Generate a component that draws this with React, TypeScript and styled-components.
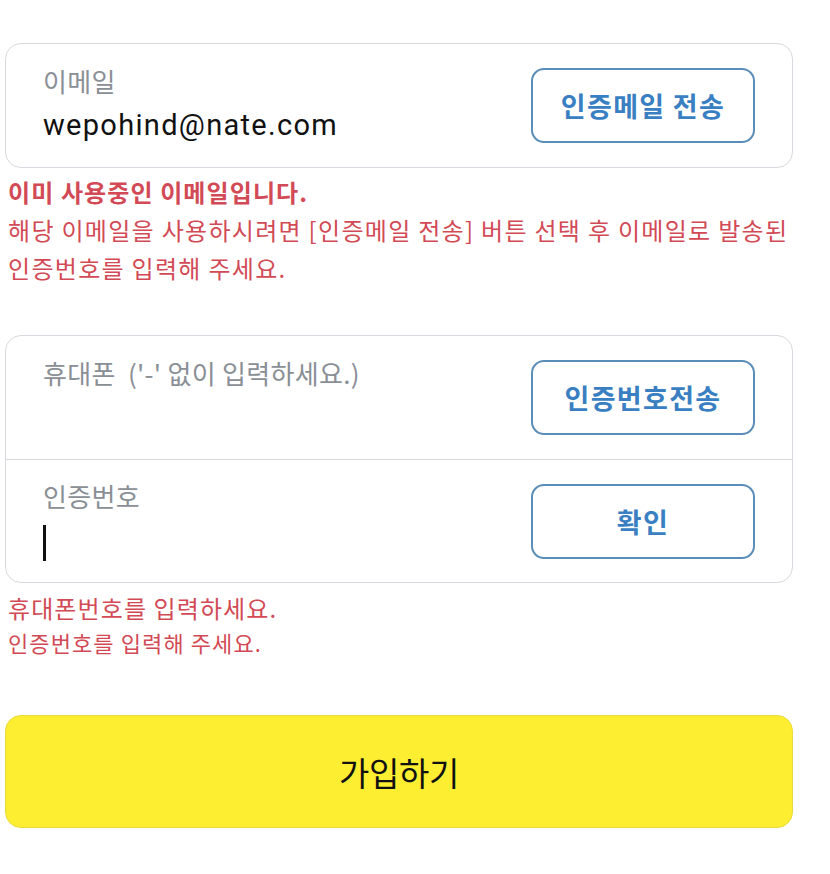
import styled, { createGlobalStyle } from 'styled-components';
import React from 'react';

const GlobalStyle = createGlobalStyle`
  html, body {
    margin: 0;
    padding: 0;
    background: #ffffff;
  }
  body {
    font-family: "Noto Sans CJK KR", "Noto Sans", Roboto, sans-serif;
  }
`;

const Page = styled.div`
  width: 830px;
  padding: 43px 37px 40px 5px;
  box-sizing: border-box;
  display: flex;
  flex-direction: column;
`;

const Card = styled.div`
  border: 1.5px solid #d6d9dd;
  border-radius: 16px;
  background: #ffffff;
  display: flex;
  flex-direction: column;
  overflow: hidden;
`;

const Row = styled.div<{ $divider?: boolean }>`
  height: 123px;
  padding: 0 37px;
  display: flex;
  align-items: center;
  justify-content: space-between;
  box-sizing: border-box;
  border-top: ${(p) => (p.$divider ? '1.5px solid #d6d9dd' : 'none')};
`;

const Field = styled.div`
  display: flex;
  flex-direction: column;
  justify-content: center;
`;

const Label = styled.div`
  font-size: 26px;
  line-height: 34px;
  color: #8a8f96;
  letter-spacing: 0.3px;
  white-space: pre;
  margin-bottom: 4px;
`;

const Value = styled.div`
  font-family: Roboto, "Noto Sans CJK KR", sans-serif;
  font-size: 29px;
  line-height: 46px;
  height: 46px;
  color: #111111;
  letter-spacing: 1.3px;
  display: flex;
  align-items: center;
`;

const Caret = styled.span`
  display: block;
  width: 2.5px;
  height: 36px;
  margin-top: 5px;
  background: #111111;
`;

const OutlineButton = styled.button`
  width: 224px;
  height: 75px;
  flex-shrink: 0;
  border: 2px solid #5a8db8;
  border-radius: 13px;
  background: #ffffff;
  color: #3a7fc2;
  font-family: "Noto Sans CJK KR", sans-serif;
  font-weight: 700;
  font-size: 27px;
  letter-spacing: 1.3px;
  padding: 0;
`;

const ErrorBlock = styled.div<{ $top: number }>`
  margin-top: ${(p) => p.$top}px;
  padding-left: 3px;
  color: #d24a55;
  display: flex;
  flex-direction: column;
`;

const ErrorLine = styled.div<{ $bold?: boolean; $size?: number; $height?: number; $spacing?: number }>`
  font-size: ${(p) => p.$size ?? 24}px;
  line-height: ${(p) => p.$height ?? 38}px;
  font-weight: ${(p) => (p.$bold ? 700 : 400)};
  letter-spacing: ${(p) => p.$spacing ?? 1.3}px;
  white-space: nowrap;
`;

const Spacer = styled.div<{ $h: number }>`
  height: ${(p) => p.$h}px;
`;

const SubmitButton = styled.button`
  height: 113px;
  width: 100%;
  border: 1.5px solid #eadb3a;
  border-radius: 16px;
  background: #fdee31;
  color: #111111;
  font-family: "Noto Sans CJK KR", sans-serif;
  font-size: 33px;
  font-weight: 400;
  letter-spacing: -0.3px;
  padding: 0;
`;

export default function App() {
  return (
    <>
      <GlobalStyle />
      <Page>
        <Card>
          <Row>
            <Field>
              <Label>이메일</Label>
              <Value>wepohind@nate.com</Value>
            </Field>
            <OutlineButton>인증메일 전송</OutlineButton>
          </Row>
        </Card>

        <ErrorBlock $top={5}>
          <ErrorLine $bold $spacing={1.1}>이미 사용중인 이메일입니다.</ErrorLine>
          <ErrorLine>해당 이메일을 사용하시려면 [인증메일 전송] 버튼 선택 후 이메일로 발송된</ErrorLine>
          <ErrorLine>인증번호를 입력해 주세요.</ErrorLine>
        </ErrorBlock>

        <Spacer $h={48} />

        <Card>
          <Row>
            <Field>
              <Label>휴대폰  ('-' 없이 입력하세요.)</Label>
              <Value />
            </Field>
            <OutlineButton>인증번호전송</OutlineButton>
          </Row>
          <Row $divider>
            <Field>
              <Label>인증번호</Label>
              <Value>
                <Caret />
              </Value>
            </Field>
            <OutlineButton>확인</OutlineButton>
          </Row>
        </Card>

        <ErrorBlock $top={8}>
          <ErrorLine $height={34} $spacing={1.1}>휴대폰번호를 입력하세요.</ErrorLine>
          <ErrorLine $size={22} $height={34} $spacing={1.1}>인증번호를 입력해 주세요.</ErrorLine>
        </ErrorBlock>

        <Spacer $h={56} />

        <SubmitButton>가입하기</SubmitButton>
      </Page>
    </>
  );
}
